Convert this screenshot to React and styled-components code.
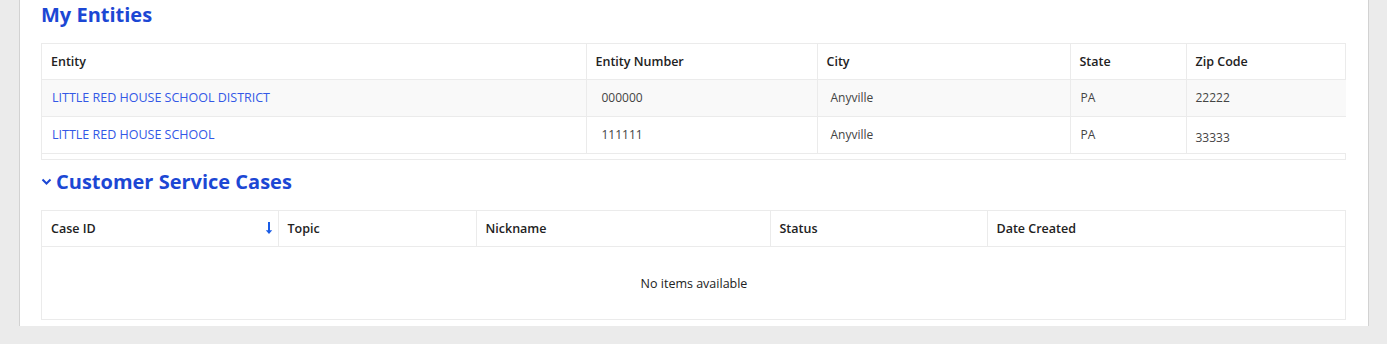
import React from 'react'
import styled, { createGlobalStyle } from 'styled-components'

const GlobalStyle = createGlobalStyle`
  body {
    margin: 0;
    background: #ebebeb;
    font-family: 'Open Sans', 'Noto Sans', sans-serif;
  }
`

const entityColumns = [
  { label: 'Entity', width: 544 },
  { label: 'Entity Number', width: 231 },
  { label: 'City', width: 253 },
  { label: 'State', width: 116 },
  { label: 'Zip Code', width: 160 },
]

const entities = [
  { name: 'LITTLE RED HOUSE SCHOOL DISTRICT', number: '000000', city: 'Anyville', state: 'PA', zip: '22222' },
  { name: 'LITTLE RED HOUSE SCHOOL', number: '111111', city: 'Anyville', state: 'PA', zip: '33333', zipLow: true },
]

const caseColumns = [
  { label: 'Case ID', width: 236, sorted: true },
  { label: 'Topic', width: 198 },
  { label: 'Nickname', width: 294 },
  { label: 'Status', width: 217 },
  { label: 'Date Created', width: 359 },
]

const Page = styled.div`
  padding: 0 18px 18px 19px;
`

const Panel = styled.main`
  background: #fff;
  border-left: 1px solid #d2d2d2;
  border-right: 1px solid #d2d2d2;
  padding: 1px 22px 6px 21px;
  height: 319px;
`

const Heading = styled.h2`
  display: flex;
  align-items: center;
  gap: 4px;
  margin: 0;
  margin-top: ${(p) => p.$top || 0}px;
  height: 28px;
  font-size: 20px;
  font-weight: 700;
  color: #1c47d4;
  line-height: 28px;
`

const TableBox = styled.div`
  margin-top: ${(p) => p.$top}px;
  border: 1px solid #ebebeb;
  padding-bottom: ${(p) => p.$pad || 0}px;
`

const Table = styled.table`
  width: 100%;
  border-collapse: collapse;
  table-layout: fixed;
`

const Th = styled.th`
  box-sizing: border-box;
  height: ${(p) => p.$h || 35}px;
  padding: 0 ${(p) => (p.$sorted ? 5 : 9)}px 0 9px;
  text-align: left;
  font-size: 12.5px;
  font-weight: 600;
  color: #222;
  border-left: 1px solid #ebebeb;
  border-bottom: 1px solid #ebebeb;
  &:first-child {
    border-left: none;
  }
`

const SortCell = styled.div`
  display: flex;
  align-items: center;
  justify-content: space-between;
`

const Row = styled.tr`
  background: ${(p) => (p.$striped ? '#f9f9f9' : '#fff')};
`

const Td = styled.td`
  box-sizing: border-box;
  height: 37px;
  padding: ${(p) => (p.$low ? '5px' : '0')} 10px 0 ${(p) => p.$indent || 10}px;
  font-size: 12px;
  color: #444;
  border-left: 1px solid #ebebeb;
  border-bottom: 1px solid #ebebeb;
  vertical-align: middle;
  &:first-child {
    border-left: none;
  }
`

const EntityLink = styled.a`
  color: #3358e6;
  text-decoration: none;
  font-size: 12.5px;
`

const Empty = styled.td`
  height: 70px;
  text-align: center;
  font-size: 12.5px;
  color: #222;
`

const Chevron = () => (
  <svg width="11" height="8" viewBox="0 0 11 8">
    <path d="M1.5 1.5 L5.5 5.5 L9.5 1.5" fill="none" stroke="#1c47d4" strokeWidth="2" />
  </svg>
)

const SortArrow = () => (
  <svg width="8" height="13" viewBox="0 0 8 13">
    <path d="M4 0 V11" stroke="#1a5ce6" strokeWidth="2" />
    <path d="M0.8 8.2 L4 12 L7.2 8.2 Z" fill="#1a5ce6" />
  </svg>
)

const App = () => {
  return (
    <Page>
      <GlobalStyle />
      <Panel>
        <Heading>My Entities</Heading>
        <TableBox $top={14} $pad={5}>
          <Table>
            <colgroup>
              {entityColumns.map((c) => (
                <col key={c.label} style={{ width: c.width }} />
              ))}
            </colgroup>
            <thead>
              <tr>
                {entityColumns.map((c) => (
                  <Th key={c.label}>{c.label}</Th>
                ))}
              </tr>
            </thead>
            <tbody>
              {entities.map((e, i) => (
                <Row key={e.number} $striped={i === 0}>
                  <Td>
                    <EntityLink href="#">{e.name}</EntityLink>
                  </Td>
                  <Td $indent={15}>{e.number}</Td>
                  <Td $indent={13}>{e.city}</Td>
                  <Td>{e.state}</Td>
                  <Td $indent={9} $low={e.zipLow}>{e.zip}</Td>
                </Row>
              ))}
            </tbody>
          </Table>
        </TableBox>

        <Heading $top={8}>
          <Chevron />
          Customer Service Cases
        </Heading>
        <TableBox $top={14}>
          <Table>
            <colgroup>
              {caseColumns.map((c) => (
                <col key={c.label} style={{ width: c.width }} />
              ))}
            </colgroup>
            <thead>
              <tr>
                {caseColumns.map((c) => (
                  <Th key={c.label} $sorted={c.sorted} $h={36}>
                    {c.sorted ? (
                      <SortCell>
                        {c.label}
                        <SortArrow />
                      </SortCell>
                    ) : (
                      c.label
                    )}
                  </Th>
                ))}
              </tr>
            </thead>
            <tbody>
              <tr>
                <Empty colSpan={5}>No items available</Empty>
              </tr>
            </tbody>
          </Table>
        </TableBox>
      </Panel>
    </Page>
  )
}

export default App
